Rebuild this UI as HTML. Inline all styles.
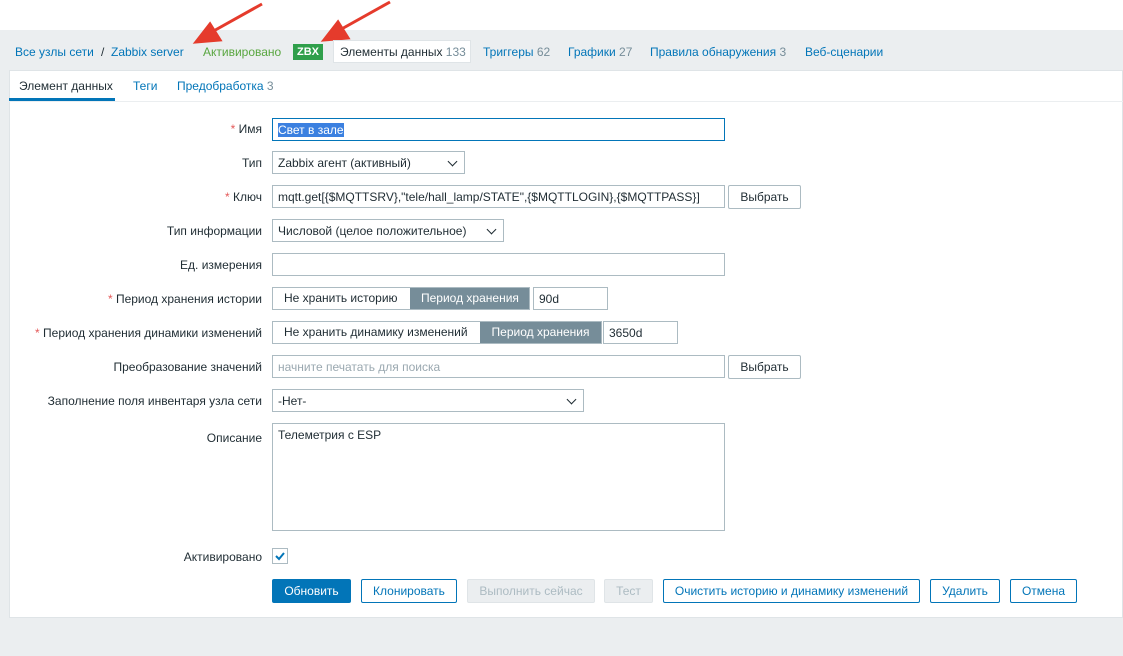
<!DOCTYPE html><html><head><meta charset="utf-8"><style>
*{box-sizing:border-box}
body{margin:0;width:1123px;height:656px;background:#ebeef0;font:12px "Liberation Sans",Arial,sans-serif;color:#1f2c33;position:relative;overflow:hidden}
.a{position:absolute}
.top{left:0;top:0;width:1123px;height:30px;background:#fff}
.nav a{position:absolute;top:45px;color:#0275b8;text-decoration:none;white-space:nowrap}
.nav .c{color:#768d99}
.panel{left:9px;top:70px;width:1114px;height:548px;background:#fff;border:1px solid #dfe4e7}
.lbl{position:absolute;right:861px;text-align:right;white-space:nowrap}
.lbl i{color:#e45959;font-style:normal}
.in{position:absolute;height:23px;border:1px solid #acbbc2;background:#fff;padding:4px 5px;white-space:nowrap;overflow:hidden}
.sel:after{content:"";position:absolute;right:8px;top:6px;width:6px;height:6px;border-right:1.5px solid #1f2c33;border-bottom:1.5px solid #1f2c33;transform:rotate(45deg)}
.btn{position:absolute;height:24px;border:1px solid #0275b8;color:#0275b8;background:#fff;text-align:center;line-height:22px;border-radius:2px;white-space:nowrap}
.dis{border-color:#dfe4e7;background:#ebeef0;color:#acbbc2}
.seg{position:absolute;height:23px;border:1px solid #acbbc2;display:flex;white-space:nowrap;overflow:hidden}
.seg span{padding:0 11px;line-height:21px;flex:none}
.seg .on{background:#768d99;color:#fff;flex:1;text-align:center}
</style></head><body>
<div class="a top"></div>
<svg class="a" style="left:0;top:0" width="1123" height="60"><g stroke="#e53b2c" stroke-width="3" fill="#e53b2c"><line x1="262" y1="4" x2="210" y2="33"/><polygon points="196,42 210,24 220,40"/><line x1="390" y1="2" x2="338" y2="31"/><polygon points="324,40 338,22 348,38"/></g></svg>
<div class="nav">
<a style="left:15px">Все узлы сети</a><a style="left:101px;color:#1f2c33">/</a><a style="left:111px">Zabbix server</a>
<a style="left:203px;color:#59a640">Активировано</a>
<span class="a" style="left:293px;top:44px;width:30px;height:16px;background:#2f9f4b;color:#fff;font-weight:bold;text-align:center;line-height:16px;font-size:11px">ZBX</span>
<span class="a" style="left:333px;top:40px;width:138px;height:23px;background:#fff;border:1px solid #dfe4e7"></span>
<a style="left:340px;color:#1f2c33">Элементы данных <span class="c">133</span></a>
<a style="left:483px">Триггеры <span class="c">62</span></a>
<a style="left:568px">Графики <span class="c">27</span></a>
<a style="left:650px">Правила обнаружения <span class="c">3</span></a>
<a style="left:805px">Веб-сценарии</a>
</div>
<div class="a panel"></div>
<div class="a" style="left:9px;top:101px;width:1114px;height:1px;background:#ebeef0"></div>
<div class="a" style="left:19px;top:79px">Элемент данных</div>
<div class="a" style="left:9px;top:98px;width:106px;height:3px;background:#0275b8"></div>
<div class="a" style="left:133px;top:79px;color:#0275b8">Теги</div>
<div class="a" style="left:177px;top:79px;color:#0275b8">Предобработка <span style="color:#768d99">3</span></div>

<div class="lbl" style="top:122px"><i>*</i> Имя</div>
<div class="in" style="left:272px;top:118px;width:453px;border-color:#0275b8"><span style="background:#3b80e0;color:#fff">Свет в зале</span></div>
<div class="lbl" style="top:156px">Тип</div>
<div class="in sel" style="left:272px;top:151px;width:193px">Zabbix агент (активный)</div>
<div class="lbl" style="top:190px"><i>*</i> Ключ</div>
<div class="in" style="left:272px;top:185px;width:453px">mqtt.get[{$MQTTSRV},"tele/hall_lamp/STATE",{$MQTTLOGIN},{$MQTTPASS}]</div>
<div class="btn" style="left:728px;top:185px;width:73px;border-color:#acbbc2;color:#1f2c33">Выбрать</div>
<div class="lbl" style="top:224px">Тип информации</div>
<div class="in sel" style="left:272px;top:219px;width:232px">Числовой (целое положительное)</div>
<div class="lbl" style="top:258px">Ед. измерения</div>
<div class="in" style="left:272px;top:253px;width:453px"></div>
<div class="lbl" style="top:292px"><i>*</i> Период хранения истории</div>
<div class="seg" style="left:272px;top:287px;width:258px"><span style="width:137px">Не хранить историю</span><span class="on">Период хранения</span></div>
<div class="in" style="left:533px;top:287px;width:75px">90d</div>
<div class="lbl" style="top:326px"><i>*</i> Период хранения динамики изменений</div>
<div class="seg" style="left:272px;top:321px;width:330px"><span style="width:207px">Не хранить динамику изменений</span><span class="on">Период хранения</span></div>
<div class="in" style="left:603px;top:321px;width:75px">3650d</div>
<div class="lbl" style="top:360px">Преобразование значений</div>
<div class="in" style="left:272px;top:355px;width:453px;color:#9aa8b0">начните печатать для поиска</div>
<div class="btn" style="left:728px;top:355px;width:73px;border-color:#acbbc2;color:#1f2c33">Выбрать</div>
<div class="lbl" style="top:394px">Заполнение поля инвентаря узла сети</div>
<div class="in sel" style="left:272px;top:389px;width:312px">-Нет-</div>
<div class="lbl" style="top:431px">Описание</div>
<div class="in" style="left:272px;top:423px;width:453px;height:108px">Телеметрия с ESP</div>
<div class="lbl" style="top:550px">Активировано</div>
<div class="a" style="left:272px;top:548px;width:16px;height:16px;border:1px solid #acbbc2"><svg width="14" height="14"><path d="M3 7l3 3 5-6" stroke="#0275b8" stroke-width="2" fill="none"/></svg></div>

<div class="btn" style="left:272px;top:579px;width:79px;background:#0275b8;color:#fff">Обновить</div>
<div class="btn" style="left:361px;top:579px;width:96px">Клонировать</div>
<div class="btn dis" style="left:467px;top:579px;width:128px">Выполнить сейчас</div>
<div class="btn dis" style="left:604px;top:579px;width:49px">Тест</div>
<div class="btn" style="left:663px;top:579px;width:257px">Очистить историю и динамику изменений</div>
<div class="btn" style="left:930px;top:579px;width:70px">Удалить</div>
<div class="btn" style="left:1010px;top:579px;width:67px">Отмена</div>
</body></html>
